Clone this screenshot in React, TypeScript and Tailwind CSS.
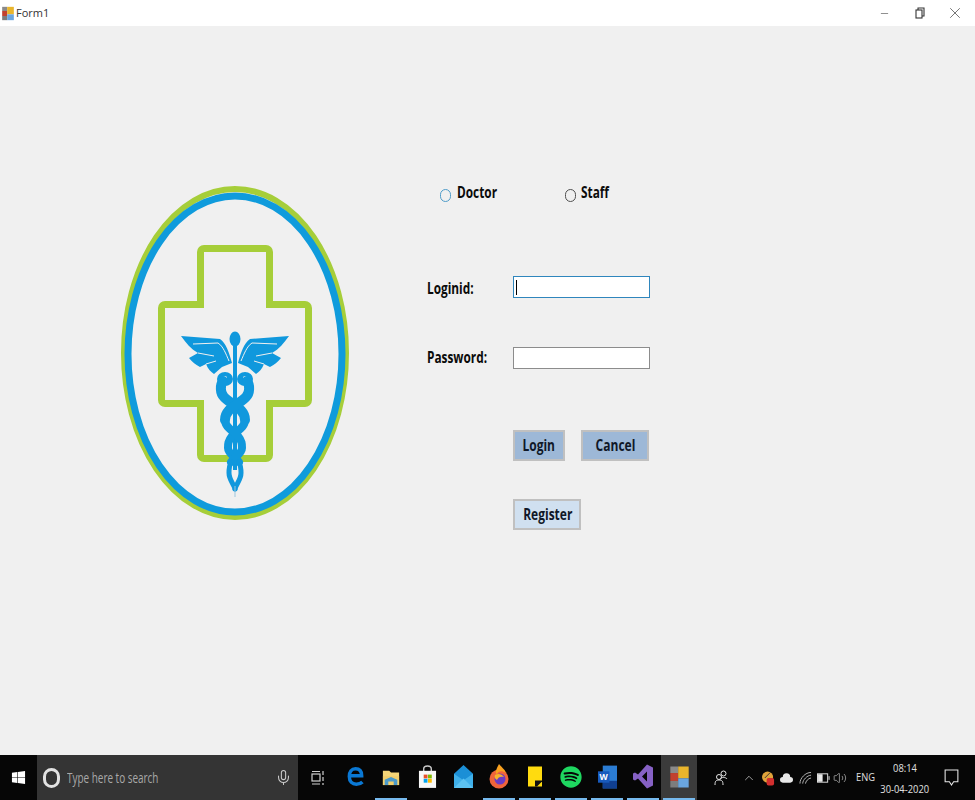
import type { ReactNode } from "react";
import { FaSpotify, FaWindows } from "react-icons/fa";
import { ChevronUp, Mic, Minus, Volume2, X } from "lucide-react";

const appIconBlocks = (
  <>
    <rect x="1" y="1" width="6" height="5" fill="#8a8a8a" />
    <rect x="1" y="6" width="6" height="6" fill="#c2412f" />
    <rect x="1" y="12" width="6" height="5" fill="#7d7d7d" />
    <rect x="7" y="1" width="8" height="9" fill="#e9b52c" />
    <rect x="7" y="10" width="8" height="7" fill="#6aa6e0" />
  </>
);

function Logo() {
  return (
    <svg viewBox="121 186 230 336" className="h-[336px] w-[230px] shrink-0">
      <ellipse cx="235" cy="353" rx="111" ry="164" fill="none" stroke="#a6ce39" strokeWidth="6" />
      <ellipse cx="235" cy="354" rx="107" ry="158" fill="none" stroke="#0f9bdc" strokeWidth="7" />
      <path
        d="M204 248.500H266a3.500 3.500 0 0 1 3.500 3.500V304.500H305a3.500 3.500 0 0 1 3.500 3.500V400a3.500 3.500 0 0 1-3.500 3.500H269.500V455a3.500 3.500 0 0 1-3.500 3.500H204a3.500 3.500 0 0 1-3.500-3.500V403.500H165a3.500 3.500 0 0 1-3.500-3.500V308a3.500 3.500 0 0 1 3.500-3.500H200.500V252a3.500 3.500 0 0 1 3.500-3.500Z"
        fill="none"
        stroke="#a6ce39"
        strokeWidth="7"
      />
      <g fill="#1098dd">
        <path d="M181 336L220 339C226 343 229 352 232 363L222 367L214 374C211 372 208 369 206 364L200 367C196 365 192 362 189 358L198 353C191 349 186 343 181 336Z" />
        <path d="M289 336L250 339C244 343 241 352 238 363L248 367L256 374C259 372 262 369 264 364L270 367C274 365 278 362 281 358L272 353C279 349 284 343 289 336Z" />
        <ellipse cx="235" cy="339" rx="5.500" ry="7.500" />
        <rect x="233" y="345" width="4" height="125" />
        <ellipse cx="225" cy="379" rx="8" ry="7" />
        <ellipse cx="245" cy="379" rx="8" ry="7" />
      </g>
      <g fill="none" stroke="#f0f0f0" strokeWidth="1">
        <path d="M193 344L218 343C223 346 226 354 229 361" />
        <path d="M277 344L252 343C247 346 244 354 241 361" />
        <path d="M198 353L214 356M206 364L216 361" />
        <path d="M272 353L256 356M264 364L254 361" />
      </g>
      <circle cx="225" cy="378" r="2" fill="#f0f0f0" />
      <circle cx="245" cy="378" r="2" fill="#f0f0f0" />
      <g fill="none" stroke="#1098dd" strokeLinecap="round">
        <path d="M223 381C220 385 220 393 224 397C230 404 245 408 245 420" strokeWidth="10" />
        <path d="M247 381C250 385 250 393 246 397C240 404 225 408 225 420" strokeWidth="10" />
        <path d="M245 420C245 428 236 431 232 436C228 441 228 444 228 448C228 454 236 457 239 462" strokeWidth="8" />
        <path d="M225 420C225 428 234 431 238 436C242 441 242 444 242 448C242 454 234 457 231 462" strokeWidth="8" />
        <path d="M239 462C241 466 241 470 241 473C241 480 236 484 235 489" strokeWidth="5" />
        <path d="M231 462C229 466 229 470 229 473C229 480 234 484 235 489" strokeWidth="5" />
      </g>
      <path d="M235 486V497" stroke="#9cc7de" strokeWidth="1" />
    </svg>
  );
}

function Radio({ active }: { active?: boolean }) {
  return (
    <span className={`block h-[13px] w-[11px] shrink-0 rounded-full border-[1.5px] bg-[#f0f0f0] ${active ? "border-[#4f9cc9]" : "border-[#505050]"}`} />
  );
}

function Slot({ on, active, children }: { on?: boolean; active?: boolean; children: ReactNode }) {
  return (
    <div className={`flex h-[45px] w-[36px] flex-col items-center ${active ? "bg-[#3b3b3b]" : ""}`}>
      <div className="flex flex-1 items-center justify-center">{children}</div>
      <div className={`h-[2px] w-[32px] ${on ? "bg-[#76b9ed]" : ""}`} />
    </div>
  );
}

export default function App() {
  const labelText = "origin-left scale-x-[0.74] text-[16px] font-bold leading-[20px] text-[#0b0b0b]";
  const buttonBase = "h-[31px] border-2 border-[#c0c0c0] pb-[2px] text-[16px] font-bold leading-none text-[#101828]";

  return (
    <div className="flex h-[800px] w-[975px] flex-col overflow-hidden bg-[#f0f0f0] font-['Open_Sans',sans-serif]">
      {/* title bar */}
      <div className="flex h-[26px] items-center bg-white">
        <svg viewBox="0 0 16 18" className="ml-[1px] h-[15px] w-[14px]">{appIconBlocks}</svg>
        <span className="ml-[1px] text-[11px] text-[#333333]">Form1</span>
        <div className="ml-auto flex items-center pr-[3px]">
          <div className="flex w-[35px] justify-center"><Minus size={11} strokeWidth={1.200} color="#333333" /></div>
          <div className="flex w-[35px] justify-center">
            <svg viewBox="0 0 10 12" className="h-[12px] w-[10px]" fill="none" stroke="#333333" strokeWidth="1.100">
              <rect x="1" y="3" width="6" height="8" />
              <path d="M3 3V1H9V9H7" />
            </svg>
          </div>
          <div className="flex w-[35px] justify-center"><X size={18} strokeWidth={0.900} color="#333333" /></div>
        </div>
      </div>

      {/* form */}
      <div className="flex flex-1 pl-[121px] pt-[160px]">
        <Logo />
        <div className="ml-[76px] flex flex-col">
          <div className="flex h-[20px] pl-[13px]">
            <div className="flex w-[125px]">
              <span className="mt-[3px]"><Radio active /></span>
              <span className={`ml-[6px] ${labelText} -mt-[4px]`}>Doctor</span>
            </div>
            <span className="mt-[3px]"><Radio /></span>
            <span className={`ml-[5px] ${labelText} -mt-[4px]`}>Staff</span>
          </div>

          <div className="mt-[70px] flex h-[22px] items-center">
            <span className={`w-[86px] ${labelText} mt-[2px]`}>Loginid:</span>
            <div className="flex h-[22px] w-[137px] items-center border border-[#2f86bd] bg-white pl-[2px]">
              <div className="h-[15px] w-px bg-black" />
            </div>
          </div>

          <div className="mt-[49px] flex h-[22px] items-center">
            <span className={`w-[86px] ${labelText} -mt-[3px]`}>Password:</span>
            <div className="h-[22px] w-[137px] border border-[#8c8c8c] bg-white" />
          </div>

          <div className="ml-[86px] mt-[61px] flex gap-[16px]">
            <button className={`${buttonBase} w-[52px] bg-[#9db8d7]`}><span className="inline-block scale-x-[0.75]">Login</span></button>
            <button className={`${buttonBase} w-[68px] bg-[#9db8d7]`}><span className="inline-block scale-x-[0.75]">Cancel</span></button>
          </div>

          <div className="ml-[86px] mt-[38px]">
            <button className={`${buttonBase} w-[68px] bg-[#d0e0f0]`}><span className="inline-block scale-x-[0.75]">Register</span></button>
          </div>
        </div>
      </div>

      {/* taskbar */}
      <div className="flex h-[45px] items-center bg-[#060606] text-white">
        <div className="flex h-full w-[37px] items-center justify-center">
          <FaWindows size={15} color="#ffffff" />
        </div>
        <div className="flex h-full w-[261px] items-center bg-[#343434] pl-[6px]">
          <div className="h-[20px] w-[17px] rounded-full border-[3px] border-[#e2e2e2]" />
          <span className="ml-[7px] origin-left scale-x-[0.71] whitespace-nowrap text-[14px] text-[#a9a9a9]">Type here to search</span>
          <div className="ml-auto mr-[6px]"><Mic size={17} strokeWidth={1.500} color="#c9c9c9" /></div>
        </div>
        <div className="flex h-full w-[39px] items-center justify-center">
          <svg viewBox="0 0 14 16" className="h-[16px] w-[14px]" fill="none" stroke="#d0d0d0" strokeWidth="1.200">
            <rect x="1" y="4" width="8" height="7" />
            <path d="M1 1.500H9M1 14H9M12 1V5M12 7V11M12 13V15" />
          </svg>
        </div>
        <Slot>
          <svg viewBox="0 0 22 26" className="h-[25px] w-[17px]" fill="none" stroke="#0a78d4" strokeWidth="4.500">
            <path d="M4 12H19C19 6 16 3 11 3C6 3 3 7 3 13C3 20 7 23 12 23C15 23 18 22 20 20" />
          </svg>
        </Slot>
        <Slot on>
          <svg viewBox="0 0 20 20" className="h-[20px] w-[18px]">
            <path d="M1 3H8L10 5H19V19H1Z" fill="#f6d678" />
            <rect x="1" y="9" width="18" height="10" fill="#f3cf6b" />
            <path d="M3 19V13L10 10L17 13V19H13V15H7V19Z" fill="#4c9ac9" />
          </svg>
        </Slot>
        <Slot>
          <svg viewBox="0 0 20 24" className="h-[25px] w-[19px]">
            <path d="M6 7V4C6 0 14 0 14 4V7" fill="none" stroke="#c8c8c8" strokeWidth="1.500" />
            <rect x="1" y="6" width="18" height="18" fill="#f7f7f7" />
            <rect x="6" y="10" width="4" height="4" fill="#e8502a" />
            <rect x="10.500" y="10" width="4" height="4" fill="#7fba00" />
            <rect x="6" y="14.500" width="4" height="4" fill="#00a4ef" />
            <rect x="10.500" y="14.500" width="4" height="4" fill="#ffb900" />
          </svg>
        </Slot>
        <Slot>
          <svg viewBox="0 0 20 24" className="h-[25px] w-[19px]">
            <path d="M0 9L10 0L20 9V24H0Z" fill="#1b8fd6" />
            <path d="M0 9L10 16L20 9V24H0Z" fill="#3fb0ea" />
            <path d="M0 24L10 14L20 24Z" fill="#5cc3f2" />
          </svg>
        </Slot>
        <Slot on>
          <svg viewBox="0 0 20 26" className="h-[26px] w-[20px]">
            <circle cx="10" cy="15" r="9.500" fill="#f0643a" />
            <path d="M10 0C12 3 16 5 17 9C13 6 9 7 8 10C5 9 8 4 10 0Z" fill="#f8a11f" />
            <circle cx="11" cy="15" r="5.500" fill="#6a3bc4" />
            <path d="M6 11C9 9 13 10 15 13C12 12 9 13 8 16C6 15 5 13 6 11Z" fill="#f7b32b" />
          </svg>
        </Slot>
        <Slot on>
          <svg viewBox="0 0 14 20" className="h-[21px] w-[14px]">
            <rect width="14" height="20" fill="#ffdb0f" />
            <path d="M7 20V14H14V15L9 20Z" fill="#111111" />
          </svg>
        </Slot>
        <Slot on>
          <FaSpotify size={22} color="#1ed760" />
        </Slot>
        <Slot on>
          <svg viewBox="0 0 20 24" className="h-[24px] w-[19px]">
            <rect x="5" width="15" height="24" fill="#2b7cd3" />
            <rect x="5" y="16" width="15" height="8" fill="#103f91" />
            <rect x="0" y="6" width="12" height="12" fill="#185abd" />
            <text x="6" y="15.500" textAnchor="middle" fontSize="9" fontWeight="700" fill="#ffffff">W</text>
          </svg>
        </Slot>
        <Slot on>
          <svg viewBox="0 0 20 24" className="h-[25px] w-[20px]">
            <path d="M14 0L20 3V21L14 24L5 14L2 16L0 15V9L2 8L5 10ZM14 7L9 12L14 17Z" fill="#8661c5" fillRule="evenodd" />
          </svg>
        </Slot>
        <Slot on active>
          <svg viewBox="0 0 16 18" className="h-[24px] w-[21px]">{appIconBlocks}</svg>
        </Slot>

        <div className="flex h-full items-center">
          <svg viewBox="0 0 14 16" className="ml-[17px] h-[16px] w-[14px]" fill="none" stroke="#e6e6e6" strokeWidth="1">
            <circle cx="9.500" cy="3.500" r="2.500" />
            <path d="M6 9C7 7 12 7 13 9" />
            <circle cx="5" cy="7" r="2.500" />
            <path d="M1 15C1 11 2 10 5 10C8 10 9 11 9 15" />
          </svg>
          <div className="ml-[14px]"><ChevronUp size={14} strokeWidth={1.200} color="#dddddd" /></div>
          <svg viewBox="0 0 14 16" className="ml-[6px] h-[16px] w-[13px]">
            <circle cx="6" cy="7" r="6" fill="#e0a33a" />
            <path d="M3 8L9 2" stroke="#333333" strokeWidth="1" />
            <rect x="5" y="8" width="8" height="8" rx="2" fill="#d32f2f" />
          </svg>
          <svg viewBox="0 0 14 10" className="ml-[5px] h-[10px] w-[13px]">
            <path d="M3 10A3 3 0 0 1 3 4A4 4 0 0 1 11 4A3 3 0 0 1 11 10Z" fill="#e8e8e8" />
          </svg>
          <svg viewBox="0 0 14 14" className="ml-[6px] h-[14px] w-[13px]" fill="none" stroke="#bdbdbd" strokeWidth="1">
            <path d="M1 13C1 7 7 1 13 1M4 13C4 9 9 4 13 4M7 13C7 11 10 7 13 7" />
          </svg>
          <svg viewBox="0 0 14 10" className="ml-[5px] h-[10px] w-[13px]" fill="none" stroke="#e8e8e8" strokeWidth="1">
            <rect x="0.500" y="0.500" width="11" height="9" />
            <rect x="1.500" y="1.500" width="4" height="7" fill="#e8e8e8" />
            <path d="M13 3V7" />
          </svg>
          <div className="ml-[3px]"><Volume2 size={14} strokeWidth={1.100} color="#cfcfcf" /></div>
          <span className="ml-[9px] w-[18px] origin-left scale-x-[0.85] text-[11px] text-[#e0e0e0]">ENG</span>
          <div className="ml-[3px] flex w-[56px] flex-col items-center text-[11px] leading-[21px] text-[#e0e0e0]">
            <span className="scale-x-[0.85]">08:14</span>
            <span className="scale-x-[0.85] whitespace-nowrap">30-04-2020</span>
          </div>
          <svg viewBox="0 0 14 16" className="ml-[11px] h-[17px] w-[15px]" fill="none" stroke="#e8e8e8" strokeWidth="1">
            <path d="M1 1H13V12H9L7 15L5 12H1Z" />
          </svg>
        </div>
      </div>
    </div>
  );
}
